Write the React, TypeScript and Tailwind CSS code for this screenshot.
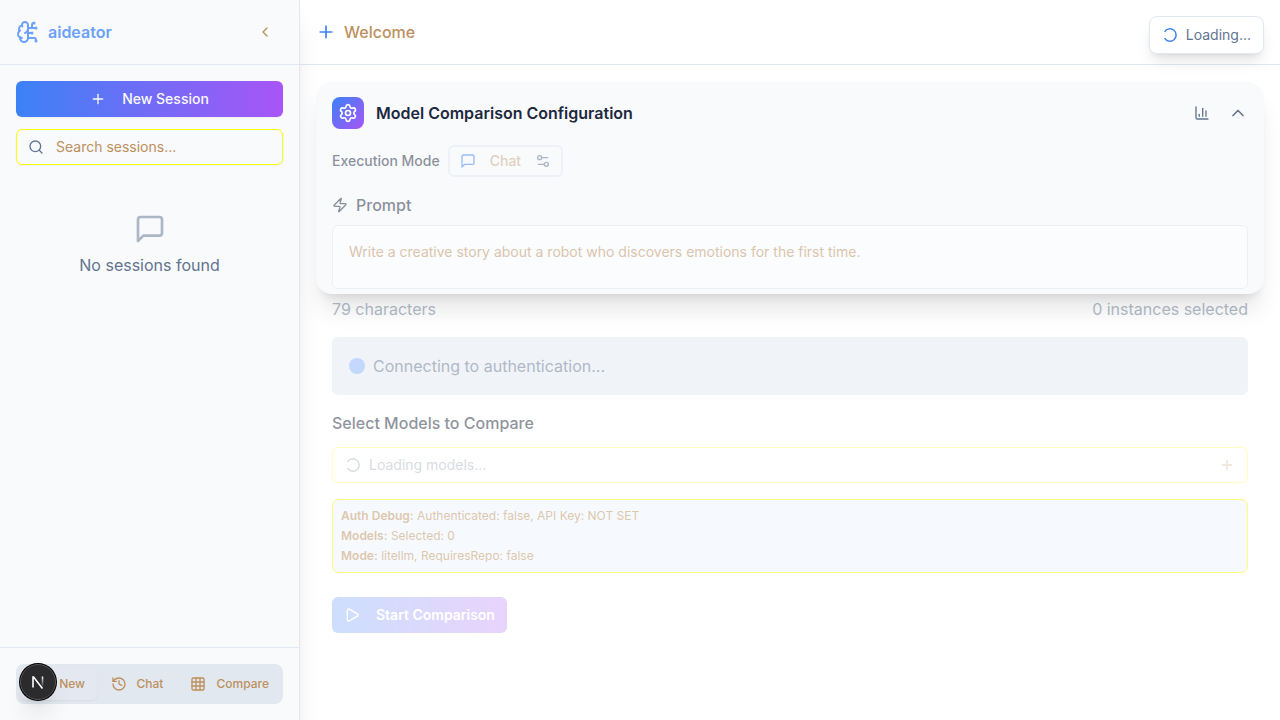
import React from "react";
import {
  BrainCircuit,
  ChartColumn,
  ChevronLeft,
  ChevronUp,
  Grid3x3,
  History,
  Play,
  Plus,
  Search,
  Settings,
  Settings2,
  Zap,
} from "lucide-react";

function Spinner({ className }: { className: string }) {
  return (
    <svg viewBox="0 0 16 16" fill="none" stroke="currentColor" strokeWidth="1.5" className={className} aria-hidden="true">
      <path d="M2.6 4.8A6.2 6.2 0 1 1 2.6 11.2" />
    </svg>
  );
}

function ChatBubble({ className }: { className: string }) {
  return (
    <svg
      viewBox="0 0 24 24"
      fill="none"
      stroke="currentColor"
      strokeWidth="2"
      strokeLinecap="round"
      strokeLinejoin="round"
      className={className}
      aria-hidden="true"
    >
      <path d="M21 15a2 2 0 0 1-2 2H7l-4 4V5a2 2 0 0 1 2-2h14a2 2 0 0 1 2 2z" />
    </svg>
  );
}

function Sidebar() {
  return (
    <aside className="relative z-10 flex w-[300px] shrink-0 flex-col border-r border-slate-200 bg-slate-50 shadow-xl">
      <header className="flex h-[65px] items-center justify-between border-b border-slate-200 px-4">
        <div className="flex items-center gap-2 font-semibold text-[#6ba1f9]">
          <BrainCircuit size={24} />
          <span>aideator</span>
        </div>
        <button type="button" aria-label="Collapse sidebar" className="flex h-9 w-9 items-center justify-center text-[#bd905e]">
          <ChevronLeft size={16} />
        </button>
      </header>

      <div className="flex flex-col gap-3 p-4">
        <button
          type="button"
          className="flex h-9 items-center justify-center gap-4 rounded-md bg-linear-to-r/srgb from-[#3b82f6] to-[#a855f7] text-sm font-medium text-slate-50 shadow-xs"
        >
          <Plus size={16} />
          New Session
        </button>
        <label className="flex h-9 items-center gap-3 rounded-md border border-[#ffff00] px-[11px] shadow-xs">
          <Search size={16} className="shrink-0 text-slate-500" />
          <input
            type="text"
            aria-label="Search sessions"
            placeholder="Search sessions..."
            className="min-w-0 flex-1 bg-transparent text-sm text-[#bd905e] outline-none placeholder:text-[#bd905e]"
          />
        </label>
      </div>

      <div className="flex flex-1 flex-col items-center gap-2 pt-8 text-slate-500">
        <ChatBubble className="h-8 w-8 opacity-50" />
        <p>No sessions found</p>
      </div>

      <footer className="border-t border-slate-200 p-4">
        <div className="flex h-10 rounded-lg bg-[#e2e8f0] p-1 text-xs font-medium text-[#bd905e]">
          <button type="button" className="flex w-[77px] items-center justify-end rounded-md bg-slate-50/10 pr-3 shadow-xs">
            New
          </button>
          <button type="button" className="flex w-20 items-center justify-center gap-2.5">
            <History size={16} />
            Chat
          </button>
          <button type="button" className="flex flex-1 items-center justify-end gap-2.5 pr-2.5">
            <Grid3x3 size={16} />
            Compare
          </button>
        </div>
      </footer>
    </aside>
  );
}

function ConfigHeader() {
  return (
    <div className="flex items-center justify-between">
      <div className="flex items-center gap-3">
        <span className="flex h-8 w-8 items-center justify-center rounded-lg bg-linear-to-br/srgb from-[#3b82f6] to-[#a855f7] text-white">
          <Settings size={20} />
        </span>
        <h2 className="font-semibold text-slate-800">Model Comparison Configuration</h2>
      </div>
      <div className="-mr-2 flex text-slate-500">
        <button type="button" aria-label="Show statistics" className="flex h-8 w-9 items-center justify-center">
          <ChartColumn size={16} />
        </button>
        <button type="button" aria-label="Collapse configuration" className="flex h-8 w-9 items-center justify-center">
          <ChevronUp size={20} />
        </button>
      </div>
    </div>
  );
}

function DebugPanel() {
  const rows = [
    ["Auth Debug:", "Authenticated: false, API Key: NOT SET"],
    ["Models:", "Selected: 0"],
    ["Mode:", "litellm, RequiresRepo: false"],
  ];
  return (
    <div className="mt-4 flex flex-col gap-1 rounded-md border border-[#ffff00] bg-[#eff6ff] p-2 text-xs text-[#bd905e] opacity-50">
      {rows.map(([label, value]) => (
        <p key={label}>
          <strong className="font-semibold">{label}</strong> {value}
        </p>
      ))}
    </div>
  );
}

function ComparisonPanel() {
  return (
    <section className="m-4 mt-[17px] h-[212px] rounded-2xl bg-slate-50 p-4 pt-[15px] shadow-xl">
      <ConfigHeader />

      <div className="mt-4 flex h-8 items-center gap-2 opacity-50">
        <span className="text-sm font-medium text-slate-800">Execution Mode</span>
        <button
          type="button"
          className="flex h-8 items-center gap-3.5 rounded-md border-2 border-[#e6eaf5] px-2.5 text-sm font-medium text-[#bd905e]/80"
        >
          <ChatBubble className="h-4 w-4 text-[#3b82f6]" />
          Chat
          <Settings2 size={16} className="text-slate-500" />
        </button>
      </div>

      <label htmlFor="prompt" className="mt-4 flex items-center gap-2 font-medium text-slate-800 opacity-50">
        <Zap size={16} />
        Prompt
      </label>
      <textarea
        id="prompt"
        defaultValue="Write a creative story about a robot who discovers emotions for the first time."
        className="mt-2 block h-16 w-full resize-none rounded-md border border-slate-200 bg-white p-4 text-sm text-[#bd905e] opacity-50 outline-none"
      />

      <div className="mt-2 flex justify-between text-slate-500 opacity-50">
        <span>79 characters</span>
        <span>0 instances selected</span>
      </div>

      <div className="mt-4 flex items-center gap-2 rounded-md border border-[#e2e8f0] bg-[#e2e8f0] p-4 text-slate-500 opacity-50">
        <span className="h-4 w-4 rounded-full bg-[#88b2fb]" />
        Connecting to authentication...
      </div>

      <h3 className="mt-4 font-medium text-slate-800 opacity-50">Select Models to Compare</h3>
      <button
        type="button"
        className="mt-3 flex h-9 w-full items-center gap-2 rounded-md border border-[#ffff00] px-3 text-sm text-slate-500 opacity-25"
      >
        <Spinner className="h-4 w-4" />
        Loading models...
        <Plus size={16} className="ml-auto text-[#bd905e]" />
      </button>

      <DebugPanel />

      <button
        type="button"
        className="mt-6 flex h-9 items-center gap-4 rounded-md bg-linear-to-r/srgb from-[#3b82f6] to-[#a855f7] px-3 text-sm font-semibold text-white opacity-25"
      >
        <Play size={16} />
        Start Comparison
      </button>
    </section>
  );
}

export default function App() {
  return (
    <div className="relative flex h-screen overflow-hidden bg-white font-['Inter',sans-serif] text-base">
      <Sidebar />
      <main className="min-w-0 flex-1">
        <header className="flex h-[65px] items-center gap-2 border-b border-slate-200 px-4">
          <Plus size={20} className="text-[#3b82f6]" />
          <h1 className="font-medium text-[#bd905e]">Welcome</h1>
        </header>
        <ComparisonPanel />
      </main>

      <div role="status" className="absolute top-4 right-4 z-20 flex h-[38px] items-center gap-2 rounded-lg border border-slate-200 bg-white px-3 text-sm text-slate-500 shadow-lg">
        <Spinner className="h-4 w-4 text-[#3b82f6]" />
        Loading...
      </div>

      <button
        type="button"
        aria-label="Open developer tools"
        className="absolute bottom-5 left-5 z-20 flex h-9 w-9 items-center justify-center rounded-full border border-[#555557] bg-[#2b2b2d] shadow-xl ring-1 ring-black"
      >
        <svg viewBox="0 0 14 14" className="h-3.5 w-3.5" fill="none" aria-hidden="true">
          <defs>
            <linearGradient id="stem" x1="0" y1="1" x2="0" y2="11" gradientUnits="userSpaceOnUse">
              <stop stopColor="white" />
              <stop offset="1" stopColor="white" stopOpacity="0.1" />
            </linearGradient>
          </defs>
          <path d="M2 12.5V2H2.6L11.5 13.5" stroke="white" strokeWidth="1.6" />
          <path d="M11.5 1.5V11" stroke="url(#stem)" strokeWidth="1.6" />
        </svg>
      </button>
    </div>
  );
}
